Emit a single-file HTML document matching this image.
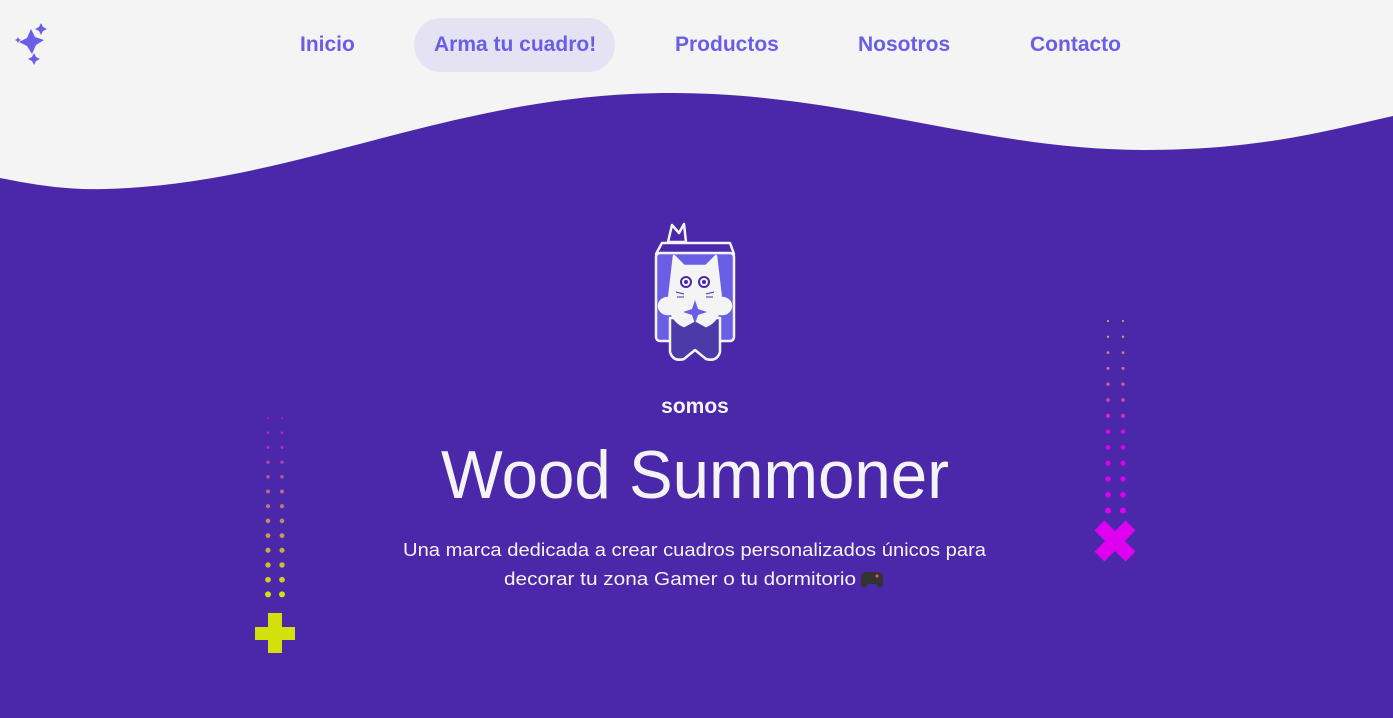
<!DOCTYPE html>
<html><head><meta charset="utf-8"><style>
html,body{margin:0;padding:0;width:1393px;height:718px;overflow:hidden;background:#f4f4f4;font-family:"Liberation Sans",sans-serif}
.nav a{position:absolute;top:33px;font-size:21px;font-weight:bold;color:#6a5ee6;text-decoration:none;line-height:24px}
.pill{position:absolute;left:414px;top:18px;width:201px;height:54px;border-radius:27px;background:#e5e3f3}
</style></head><body>
<svg width="1393" height="718" style="position:absolute;left:0;top:0">
<path d="M0,178 C40,186 70,190 105,189 C300,184 450,93 671,93 C850,93 980,150 1146,150 C1260,150 1330,130 1393,116 V718 H0 Z" fill="#4b28aa"/>
<g fill="#6a5ee6">
<path d="M31,29 L35,37 L44,40 L36,45 L32,54 L27,46 L19,42 L27,38Z"/>
<path d="M41,23 L43,27 L47,29 L43,31 L41,35 L39,31 L35,29 L39,27Z"/>
<path d="M34,53 L36,57 L40,59 L36,61 L34,65 L32,61 L28,59 L32,57Z"/>
<path d="M18,37 L19,39 L21,40 L19,41 L18,43 L17,41 L15,40 L17,39Z"/>
</g>
<!-- mascot -->
<g stroke="#f4f4f4" stroke-width="2.5" stroke-linejoin="round">
<path d="M668,242 L672,225 L679,233 L684,224 L686,242 Z" fill="#4b28aa"/>
<path d="M662,243 L730,243 L734,254 L656,254 Z" fill="#4b28aa"/>
<rect x="656" y="253" width="78" height="88" rx="4" fill="#6a5ee6"/>
<path d="M670,318 L670,352 Q673,362 684,359 L695,350 L706,359 Q717,362 720,352 L720,318 Z" fill="#4b3aa8"/>
<path d="M674,256 L684,266 L706,266 L716,256 L720,290 Q724,318 706,326 L695,320 L684,326 Q666,318 670,290 Z" fill="#f4f4f4"/>
<ellipse cx="668" cy="306" rx="9" ry="8" fill="#f4f4f4"/>
<ellipse cx="722" cy="306" rx="9" ry="8" fill="#f4f4f4"/>
</g>
<circle cx="686" cy="282" r="5" fill="none" stroke="#4b28aa" stroke-width="2"/>
<circle cx="704" cy="282" r="5" fill="none" stroke="#4b28aa" stroke-width="2"/>
<circle cx="686" cy="282" r="2" fill="#4b28aa"/><circle cx="704" cy="282" r="2" fill="#4b28aa"/>
<path d="M695,300 L698,309 L707,312 L698,315 L695,324 L692,315 L683,312 L692,309Z" fill="#6a5ee6"/>
<path d="M676,292 L684,294 M677,297 L684,297 M714,292 L706,294 M713,297 L706,297" stroke="#4b28aa" stroke-width="1"/>
<g id="dl"></g>
<path d="M268,613 h14 v14 h13 v13 h-13 v13 h-14 v-13 h-13 v-13 h13 z" fill="#d4e00c"/>
<g transform="translate(1115,541) rotate(45)" fill="#e000f0"><rect x="-22" y="-7" width="44" height="14"/><rect x="-7" y="-22" width="14" height="44"/></g>
<text x="695" y="413" text-anchor="middle" font-size="21" font-weight="bold" fill="#f4f4f4">somos</text>
<text x="441" y="498" textLength="508" lengthAdjust="spacingAndGlyphs" font-size="68" fill="#f4f4f4">Wood Summoner</text>
<text x="403" y="556" textLength="583" lengthAdjust="spacingAndGlyphs" font-size="18" fill="#f4f4f4">Una marca dedicada a crear cuadros personalizados únicos para</text>
<text x="504" y="585" textLength="352" lengthAdjust="spacingAndGlyphs" font-size="18" fill="#f4f4f4">decorar tu zona Gamer o tu dormitorio</text>
<g transform="translate(872,579)"><rect x="-11" y="-7" width="22" height="12" rx="5" fill="#333"/><circle cx="-8" cy="5" r="3.5" fill="#333"/><circle cx="8" cy="5" r="3.5" fill="#333"/><circle cx="5" cy="-3" r="1.5" fill="#e64"/></g>
</svg>
<div class="pill"></div>
<div class="nav">
<a style="left:300px">Inicio</a>
<a style="left:434px">Arma tu cuadro!</a>
<a style="left:675px">Productos</a>
<a style="left:858px">Nosotros</a>
<a style="left:1030px">Contacto</a>
</div>
<script>
var g=document.getElementById('dl'),s='';
function mix(a,b,t){return 'rgb('+a.map((v,i)=>Math.round(v+(b[i]-v)*t)).join(',')+')'}
for(var i=0;i<13;i++){var t=i/12,y=418+i*14.7,r=1.2+t*1.8;var c=mix([170,20,210],[212,224,12],t);
s+='<circle cx="268" cy="'+y+'" r="'+r+'" fill="'+c+'"/><circle cx="282" cy="'+y+'" r="'+r+'" fill="'+c+'"/>';}
for(var i=0;i<13;i++){var t=i/12,y=321+i*15.8,r=1+t*2;var c=mix([200,200,40],[224,0,240],Math.min(1,t*1.6));
s+='<circle cx="1108" cy="'+y+'" r="'+r+'" fill="'+c+'"/><circle cx="1123" cy="'+y+'" r="'+r+'" fill="'+c+'"/>';}
g.innerHTML=s;
</script>
</body></html>
